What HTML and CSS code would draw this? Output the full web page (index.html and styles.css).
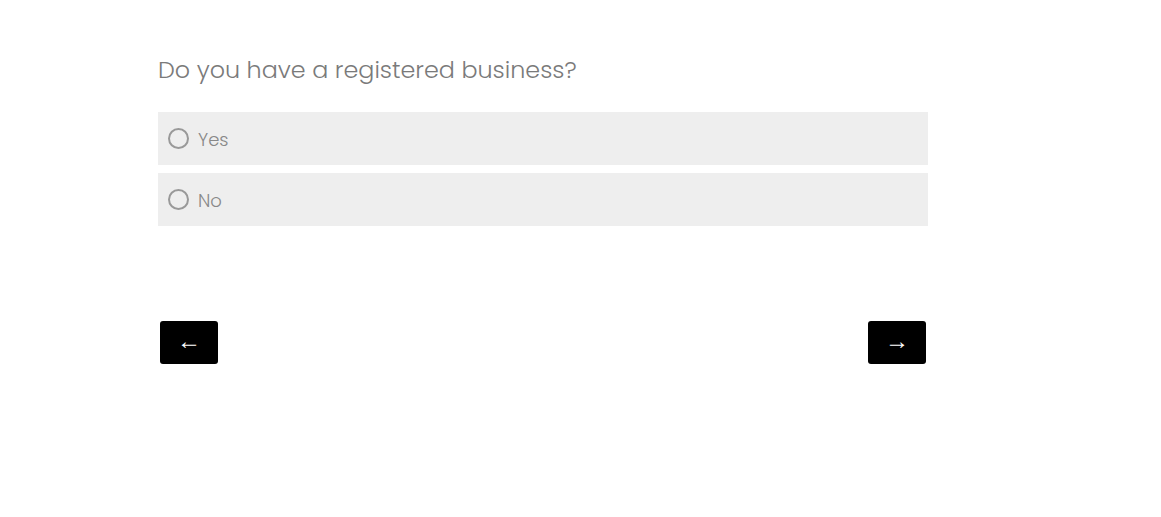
FILE: index.html
```html
<!DOCTYPE html>
<html>
<head>
  <link rel="stylesheet" href="styles.css">
</head>
<body>
  <div class="form">
    <h2 class="question">Do you have a registered business?</h2>
    <div class="options">
      <label class="option">
        <span class="radio"></span>
        <span class="option-text">Yes</span>
      </label>
      <label class="option">
        <span class="radio"></span>
        <span class="option-text">No</span>
      </label>
    </div>
    <div class="nav">
      <button class="nav-btn">&larr;</button>
      <button class="nav-btn">&rarr;</button>
    </div>
  </div>
</body>
</html>
```

FILE: styles.css
```css
body {
  margin: 0;
  background: #fff;
  font-family: "Poppins Light", "Poppins", "Lato", sans-serif;
}
.form {
  width: 770px;
  margin-left: 158px;
  padding-top: 53px;
}
.question {
  margin: 0;
  font-size: 23.85px;
  font-weight: 300;
  color: #7a7a7a;
  line-height: 34px;
}
.options {
  margin-top: 25px;
  display: flex;
  flex-direction: column;
  gap: 8px;
}
.option {
  display: flex;
  align-items: center;
  height: 53px;
  padding-left: 10px;
  background: #eee;
}
.radio {
  width: 17px;
  height: 17px;
  border: 2px solid #999;
  border-radius: 50%;
  box-sizing: content-box;
}
.option-text {
  margin-left: 9px;
  padding-top: 2px;
  font-size: 18px;
  font-weight: 300;
  color: #888;
}
.nav {
  margin: 95px 2px 0;
  display: flex;
  justify-content: space-between;
}
.nav-btn {
  width: 58px;
  height: 43px;
  border: 0;
  border-radius: 3px;
  background: #000;
  color: #fff;
  font-size: 24px;
  font-family: "Liberation Sans", sans-serif;
  padding: 0 0 3px;
}
```
